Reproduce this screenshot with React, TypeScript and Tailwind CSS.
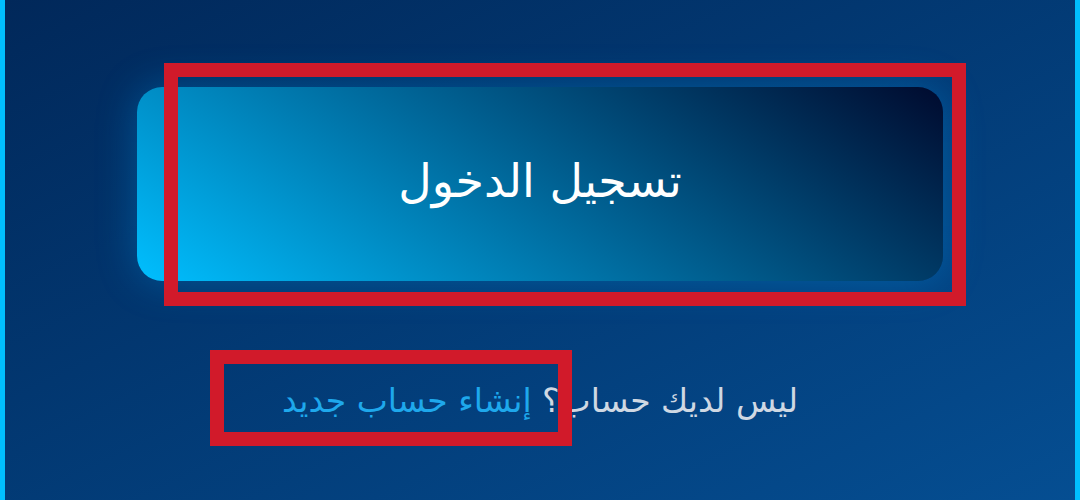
export default function App() {
  return (
    <div className="relative w-[1080px] h-[500px] overflow-hidden border-x-[5px] border-[#00bfff] bg-linear-to-br from-[#01285a] to-[#054e92] font-['DejaVu_Sans',sans-serif]">
      <div className="flex flex-col items-center">
        {/* Login button */}
        <button
          dir="rtl"
          className="mt-[87px] w-[806px] h-[194px] rounded-[25px] bg-linear-[34deg] from-[#00bfff] to-[#000a2e] shadow-[0_0_40px_rgba(0,170,255,0.3)] flex items-center justify-center text-white text-[46px] leading-none pb-[6px]"
        >
          تسجيل الدخول
        </button>

        {/* Sign up line */}
        <p dir="rtl" className="mt-[98px] text-[33px] leading-[44px] text-[#cfd8e3]">
          ليس لديك حساب؟ <span className="text-[#1ea8ec]">إنشاء حساب جديد</span>
        </p>
      </div>

      {/* Annotation boxes */}
      <div className="absolute left-[159px] top-[63px] w-[802px] h-[243px] border-[14px] border-[#d11a2a]" />
      <div className="absolute left-[205px] top-[350px] w-[362px] h-[96px] border-[14px] border-[#d11a2a]" />
    </div>
  )
}
